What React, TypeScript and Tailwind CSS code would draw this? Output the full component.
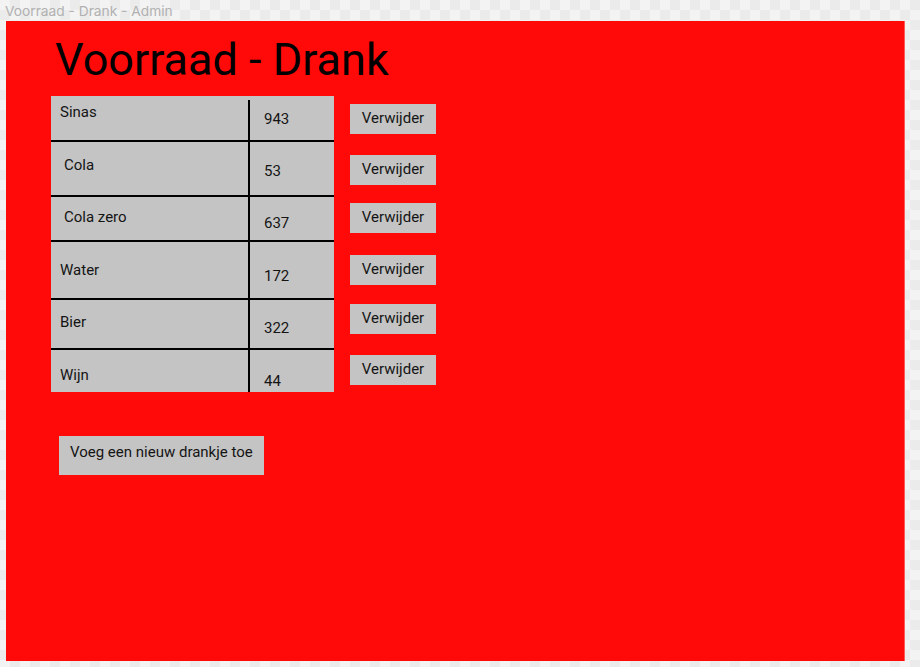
const drinks = [
  { name: "Sinas", amount: "943", h: "h-[44px]", name_pad: "pt-[8px] pl-[9px]", num_pad: "pt-[15px]", top: "mt-[4px]" },
  { name: "Cola", amount: "53", h: "h-[53px]", name_pad: "pt-[15px] pl-[13px]", num_pad: "pt-[21px]", top: "" },
  { name: "Cola zero", amount: "637", h: "h-[43px]", name_pad: "pt-[12px] pl-[13px]", num_pad: "pt-[18px]", top: "" },
  { name: "Water", amount: "172", h: "h-[56px]", name_pad: "pt-[20px] pl-[9px]", num_pad: "pt-[26px]", top: "" },
  { name: "Bier", amount: "322", h: "h-[48px]", name_pad: "pt-[14px] pl-[9px]", num_pad: "pt-[20px]", top: "" },
  { name: "Wijn", amount: "44", h: "h-[42px]", name_pad: "pt-[17px] pl-[9px]", num_pad: "pt-[23px]", top: "" },
];

// gaps between the Verwijder buttons are uneven in the mockup
const buttonMargins = ["mt-[8px]", "mt-[21px]", "mt-[18px]", "mt-[22px]", "mt-[19px]", "mt-[21px]"];

function App() {
  return (
    <div className="min-h-[667px] w-[920px] bg-[repeating-conic-gradient(#ebebeb_0_25%,#f3f3f3_0_50%)] bg-[length:20px_20px] font-['Roboto',sans-serif]">
      <p className="pl-[5px] pt-[3px] h-[21px] text-[13.75px] leading-4 text-[#b1b1b1] font-['Inter',sans-serif]">
        Voorraad - Drank - Admin
      </p>

      <div className="ml-[6px] w-[899px] h-[640px] bg-[#ff0909] border-r border-[#ff5a5a] pl-[45px] pt-[16px]">
        <h1 className="text-[45px] leading-[45px] text-black pl-[4px]">Voorraad - Drank</h1>

        <div className="flex mt-[14px]">
          <div className="w-[283px] bg-[#c4c4c4] text-[15px] leading-4 text-[#141414]">
            {drinks.map((d, i) => (
              <div
                key={d.name}
                className={`flex ${d.h} ${i < drinks.length - 1 ? "border-b-2 border-black" : ""} box-content`}
              >
                <div className={`w-[197px] ${d.name_pad}`}>{d.name}</div>
                <div className={`w-[2px] bg-black ${d.top}`} />
                <div className={`flex-1 pl-[14px] ${d.num_pad}`}>{d.amount}</div>
              </div>
            ))}
          </div>

          <div className="flex flex-col ml-[16px]">
            {buttonMargins.map((m, i) => (
              <button
                key={i}
                className={`${m} w-[86px] h-[30px] bg-[#c4c4c4] text-[15px] leading-4 text-[#141414] pb-[2px]`}
              >
                Verwijder
              </button>
            ))}
          </div>
        </div>

        <button className="mt-[44px] ml-[8px] w-[205px] h-[39px] bg-[#c4c4c4] text-left pl-[11px] pb-[7px] text-[15px] leading-4 text-[#141414]">
          Voeg een nieuw drankje toe
        </button>
      </div>
    </div>
  );
}

export default App;
